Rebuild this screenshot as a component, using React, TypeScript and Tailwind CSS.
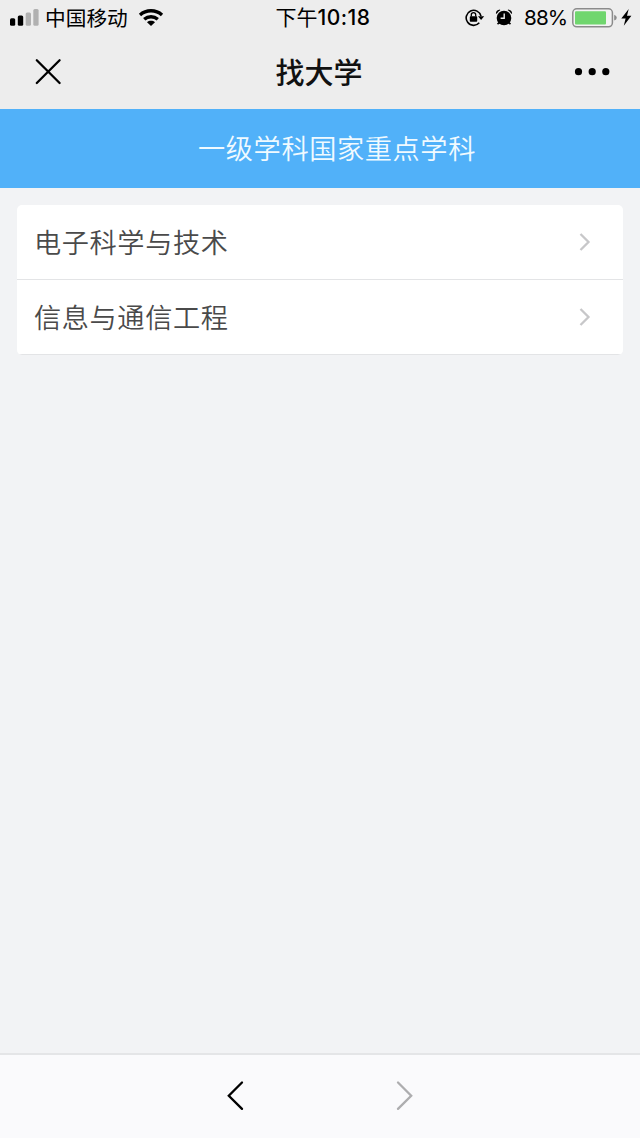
import React from "react";

const cjk = "font-['Inter','Noto_Sans_CJK_SC',sans-serif]";

function StatusBar() {
  return (
    <div className="relative flex h-[35px] items-center justify-between text-black">
      <div className="flex h-full items-center pl-[10px]">
        <svg width="29" height="18" viewBox="0 0 29 18" className="shrink-0">
          <rect x="0" y="9.2" width="5.2" height="7.5" rx="1.5" />
          <rect x="7.8" y="6.4" width="5.4" height="10.3" rx="1.5" />
          <rect x="15.7" y="3.4" width="5.3" height="13.3" rx="1.5" fill="#b1b1b1" />
          <rect x="23.3" y="0" width="5.3" height="16.7" rx="1.5" fill="#b1b1b1" />
        </svg>
        <span className="ml-[6px] w-[83px] pt-px text-[20.7px] leading-[35px] whitespace-nowrap">中国移动</span>
        <svg width="26" height="18" viewBox="0 0 26 18" className="ml-[10px] shrink-0" fill="none" stroke="#000" strokeWidth="3.4">
          <path d="M2 5.9C8.2 0.4 17.8 0.4 24 5.9" />
          <path d="M6.2 10.3C10.2 6.9 15.8 6.9 19.8 10.3" />
          <path d="M9 13.2C11.3 11.3 14.7 11.3 17 13.2L13 17Z" fill="#000" stroke="none" />
        </svg>
      </div>
      <div className="absolute inset-x-0 top-0 flex h-full items-center justify-center pl-[6px] text-[21px] leading-[35px] font-medium">
        <span className="font-normal">下午</span>
        <span className="tracking-[0.5px]">10:18</span>
      </div>
      <div className="flex h-full items-center pr-[8px]">
        <svg width="20" height="18" viewBox="0 0 20 18" className="shrink-0">
          <path d="M14.3 13.8A7.5 7.5 0 1 1 16 7.2" fill="none" stroke="#000" strokeWidth="1.6" />
          <path d="M13 7.2H19.2L16.1 11Z" />
          <rect x="4.8" y="7.3" width="7.4" height="5.4" rx="0.7" />
          <path d="M6.3 7.6V5.8a2.2 2.2 0 0 1 4.4 0V7.6" fill="none" stroke="#000" strokeWidth="1.3" />
        </svg>
        <svg width="18" height="18" viewBox="0 0 18 18" className="ml-[10px] shrink-0">
          <circle cx="9" cy="9" r="7.3" />
          <path d="M0.9 4.6Q0.9 0.9 5 0.4L5.2 1.3Q2.9 2.3 1.8 4.8ZM17.1 4.6Q17.1 0.9 13 0.4L12.8 1.3Q15.1 2.3 16.2 4.8Z" />
          <path d="m4 13.4-1.4 1.9M14 13.4l1.4 1.9" stroke="#000" strokeWidth="1.6" />
          <path d="M9.2 4.4V9.3H5.6" fill="none" stroke="#ededed" strokeWidth="1.4" />
        </svg>
        <span className="ml-[11px] w-[43px] text-[20.7px] leading-[35px] whitespace-nowrap">
          <span className="font-['Inter',sans-serif] tracking-[-0.9px]">88%</span>
        </span>
        <svg width="46" height="20" viewBox="0 0 46 20" className="ml-[5px] shrink-0">
          <rect x="0.8" y="0.8" width="39.6" height="18" rx="4" fill="#f3f3f3" stroke="#8b8b8b" strokeWidth="1.5" />
          <rect x="3" y="3.3" width="31" height="13.2" rx="1" fill="#70d66e" />
          <path d="M42.2 6.8Q44.8 7.6 44.8 9.7T42.2 12.6Z" fill="#8b8b8b" />
        </svg>
        <svg width="11" height="18" viewBox="0 0 11 18" className="ml-[3px] shrink-0">
          <path d="M7.7 0 0.3 9.5H4.6L2.8 16.8 10.4 6.8H6Z" />
        </svg>
      </div>
    </div>
  );
}

function TitleBar() {
  return (
    <div className="flex h-[74px] items-center justify-between px-[30px]">
      <svg width="36" height="36" viewBox="0 0 36 36" fill="none" stroke="#000" strokeWidth="2.3" strokeLinecap="round">
        <path d="m6.8 6.2 22.8 22.8M29.6 6.2 6.8 29" />
      </svg>
      <h1 className="pt-[3px] pr-[2px] text-[29px] leading-[40px] font-medium text-[#111]">找大学</h1>
      <svg width="36" height="36" viewBox="0 0 36 36">
        <circle cx="4.5" cy="17.7" r="3.6" />
        <circle cx="18.2" cy="17.7" r="3.6" />
        <circle cx="31.8" cy="17.7" r="3.6" />
      </svg>
    </div>
  );
}

function Row({ label }: { label: string }) {
  return (
    <li className="flex h-[75px] items-center justify-between border-b border-[#e3e4e6] pr-[32px] pl-[17px]">
      <span className="pt-[3px] text-[27.2px] leading-[40px] font-[350] tracking-[0.6px] text-[#4a4a4a]">{label}</span>
      <svg width="12" height="18" viewBox="0 0 12 18" fill="none" stroke="#c7c7c9" strokeWidth="2.3">
        <path d="m1.5 1 8 8-8 8" />
      </svg>
    </li>
  );
}

export default function App() {
  return (
    <div className={`${cjk} flex h-[1138px] w-[640px] flex-col overflow-hidden bg-[#f2f3f5]`}>
      <header className="h-[109px] shrink-0 bg-[#ededed]">
        <StatusBar />
        <TitleBar />
      </header>
      <div className="flex h-[79px] shrink-0 items-center justify-center bg-[#51b1f9] pt-[3px] pl-[34px] text-[27.2px] leading-[40px] font-[350] tracking-[0.6px] text-[#f0faff]">
        一级学科国家重点学科
      </div>
      <main className="flex-1 px-[17px] pt-[17px]">
        <ul className="overflow-hidden rounded-[5px] bg-white">
          <Row label="电子科学与技术" />
          <Row label="信息与通信工程" />
        </ul>
      </main>
      <nav className="flex h-[85px] shrink-0 items-center justify-center gap-[149px] border-t-2 border-[#e4e5e7] bg-[#fafafc] pb-px">
        <svg width="20" height="32" viewBox="0 0 20 32" fill="none" stroke="#000" strokeWidth="2.3" strokeLinecap="round">
          <path d="M16 2.5 2.8 15.7 16 28.9" />
        </svg>
        <svg width="20" height="32" viewBox="0 0 20 32" fill="none" stroke="#adadaf" strokeWidth="2.3" strokeLinecap="round">
          <path d="M3 2.5 16.2 15.7 3 28.9" />
        </svg>
      </nav>
    </div>
  );
}
